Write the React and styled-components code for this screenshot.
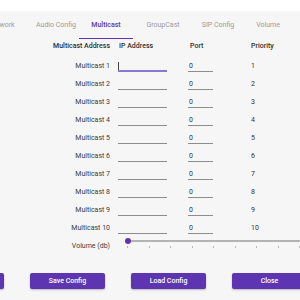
import React from "react";
import styled, { createGlobalStyle } from "styled-components";

const purple = "#5e35b1";

const GlobalStyle = createGlobalStyle`
  html, body {
    margin: 0;
    padding: 0;
    background: #f6f6f6;
  }
  body {
    font-family: Roboto, "Liberation Sans", sans-serif;
    font-size: 7px;
    color: #3c3c3c;
    overflow: hidden;
  }
`;

const Screen = styled.div`
  width: 300px;
  height: 300px;
  overflow: hidden;
  background: #f6f6f6;
`;

const TopStrip = styled.div`
  height: 11px;
  background: #ffffff;
`;

const TabBar = styled.div`
  display: flex;
  height: 28px;
  margin-left: -30px;
`;

const Tab = styled.div`
  flex: none;
  width: ${(p) => p.$w}px;
  display: flex;
  align-items: center;
  justify-content: center;
  white-space: nowrap;
  font-weight: ${(p) => (p.$active ? 500 : 400)};
  color: ${(p) => (p.$active ? purple : "#9b9b9b")};
  box-shadow: ${(p) => (p.$active ? `inset 0 -1px 0 ${purple}` : "none")};
`;

const Form = styled.div`
  display: flex;
  flex-direction: column;
`;

const HeaderRow = styled.div`
  display: grid;
  grid-template-columns: 110px 70px 70px 1fr;
  height: 14px;
  align-items: center;
  margin-bottom: 4px;
  font-weight: 500;
  color: #2f2f2f;
`;

const HeadCell = styled.div`
  padding-left: ${(p) => p.$pad || 0}px;
  text-align: ${(p) => (p.$right ? "right" : "left")};
  white-space: nowrap;
`;

const Row = styled.div`
  display: grid;
  grid-template-columns: 110px 70px 70px 1fr;
  height: 18px;
  align-items: center;
`;

const Label = styled.div`
  text-align: right;
  white-space: nowrap;
  color: #3c3c3c;
`;

const FieldCell = styled.div`
  align-self: start;
  padding-top: 3px;
  padding-left: ${(p) => p.$pad}px;
`;

const Field = styled.div`
  position: relative;
  width: ${(p) => p.$w}px;
  height: 12px;
  line-height: 12px;
  padding-left: 1px;
  box-sizing: border-box;
  color: #333;
  border-bottom: ${(p) => (p.$focused ? `2px solid #8878cf` : "1px solid #8d8d8d")};
`;

const Caret = styled.span`
  position: absolute;
  left: 0;
  top: 2px;
  width: 1px;
  height: 8px;
  background: #444;
`;

const Priority = styled.div`
  padding-left: 1px;
  color: #333;
`;

const SliderBox = styled.div`
  grid-column: 2 / -1;
  align-self: start;
  position: relative;
  margin-left: 18px;
  padding-top: 3px;
`;

const Rail = styled.div`
  height: 2px;
  background: #b3b3b3;
`;

const Ticks = styled.div`
  display: flex;
  gap: 20.5px;
  margin-top: 4px;
  margin-left: -1px;
`;

const Tick = styled.div`
  flex: none;
  width: 1px;
  height: 2px;
  background: #b8b8b8;
`;

const Thumb = styled.div`
  position: absolute;
  left: -3px;
  top: 1px;
  width: 6px;
  height: 6px;
  border-radius: 50%;
  background: ${purple};
`;

const Actions = styled.div`
  display: flex;
  gap: 26px;
  margin-left: -71px;
  margin-top: 18px;
`;

const Button = styled.button`
  flex: none;
  width: 75px;
  height: 16px;
  padding: 0;
  border: none;
  border-radius: 2px;
  background: ${purple};
  color: #ffffff;
  font-family: Roboto, "Liberation Sans", sans-serif;
  font-size: 7px;
  font-weight: 500;
  box-shadow: 0 1px 2px rgba(0, 0, 0, 0.25);
`;

const tabs = [
  { name: "Network", w: 63 },
  { name: "Audio Config", w: 46 },
  { name: "Multicast", w: 54, active: true },
  { name: "GroupCast", w: 60 },
  { name: "SIP Config", w: 50 },
  { name: "Volume", w: 50 },
  { name: "System", w: 60 },
];

const rows = Array.from({ length: 10 }, (_, i) => i + 1);

export default function App() {
  return (
    <Screen>
      <GlobalStyle />
      <TopStrip />
      <TabBar>
        {tabs.map((t) => (
          <Tab key={t.name} $w={t.w} $active={t.active}>
            {t.name}
          </Tab>
        ))}
      </TabBar>
      <Form>
        <HeaderRow>
          <HeadCell $right>Multicast Address</HeadCell>
          <HeadCell $pad={9}>IP Address</HeadCell>
          <HeadCell $pad={10}>Port</HeadCell>
          <HeadCell $pad={1}>Priority</HeadCell>
        </HeaderRow>
        {rows.map((n) => (
          <Row key={n}>
            <Label>Multicast {n}</Label>
            <FieldCell $pad={8}>
              <Field $w={49} $focused={n === 1}>
                {n === 1 && <Caret />}
              </Field>
            </FieldCell>
            <FieldCell $pad={8}>
              <Field $w={25}>0</Field>
            </FieldCell>
            <Priority>{n}</Priority>
          </Row>
        ))}
        <Row>
          <Label>Volume (db)</Label>
          <SliderBox>
            <Rail />
            <Ticks>
              {Array.from({ length: 11 }, (_, i) => (
                <Tick key={i} />
              ))}
            </Ticks>
            <Thumb />
          </SliderBox>
        </Row>
      </Form>
      <Actions>
        <Button>Apply</Button>
        <Button>Save Config</Button>
        <Button>Load Config</Button>
        <Button>Close</Button>
      </Actions>
    </Screen>
  );
}
